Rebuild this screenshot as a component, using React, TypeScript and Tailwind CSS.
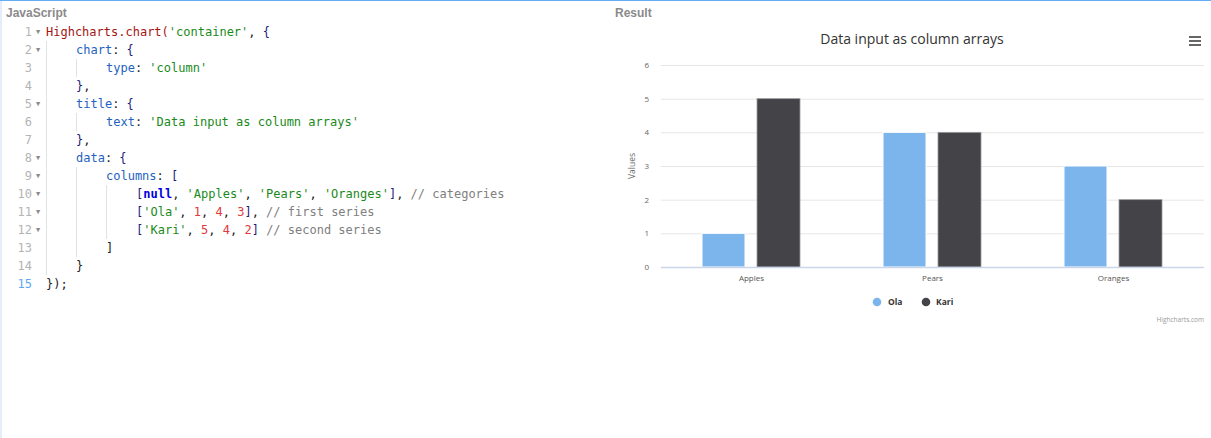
import React from "react";

type Tok = [string, string];

const C = {
  red: "text-[#a31515]",
  str: "text-[#1a8a1a]",
  brace: "text-[#1c1c78]",
  prop: "text-[#2462c0]",
  plain: "text-[#222222]",
  kw: "text-[#0000e0] font-bold",
  num: "text-[#e0393e]",
  cmt: "text-[#808080]",
};

const lines: { indent: number; fold: boolean; toks: Tok[] }[] = [
  { indent: 0, fold: true, toks: [["Highcharts.chart(", C.red], ["'container'", C.str], [", ", C.plain], ["{", C.brace]] },
  { indent: 1, fold: true, toks: [["chart", C.prop], [": ", C.plain], ["{", C.brace]] },
  { indent: 2, fold: false, toks: [["type", C.prop], [": ", C.plain], ["'column'", C.str]] },
  { indent: 1, fold: false, toks: [["}", C.brace], [",", C.plain]] },
  { indent: 1, fold: true, toks: [["title", C.prop], [": ", C.plain], ["{", C.brace]] },
  { indent: 2, fold: false, toks: [["text", C.prop], [": ", C.plain], ["'Data input as column arrays'", C.str]] },
  { indent: 1, fold: false, toks: [["}", C.brace], [",", C.plain]] },
  { indent: 1, fold: true, toks: [["data", C.prop], [": ", C.plain], ["{", C.brace]] },
  { indent: 2, fold: true, toks: [["columns", C.prop], [": ", C.plain], ["[", C.brace]] },
  {
    indent: 3,
    fold: true,
    toks: [
      ["[", C.brace], ["null", C.kw], [", ", C.plain], ["'Apples'", C.str], [", ", C.plain], ["'Pears'", C.str],
      [", ", C.plain], ["'Oranges'", C.str], ["]", C.brace], [", ", C.plain], ["// categories", C.cmt],
    ],
  },
  {
    indent: 3,
    fold: true,
    toks: [
      ["[", C.brace], ["'Ola'", C.str], [", ", C.plain], ["1", C.num], [", ", C.plain], ["4", C.num], [", ", C.plain],
      ["3", C.num], ["]", C.brace], [", ", C.plain], ["// first series", C.cmt],
    ],
  },
  {
    indent: 3,
    fold: true,
    toks: [
      ["[", C.brace], ["'Kari'", C.str], [", ", C.plain], ["5", C.num], [", ", C.plain], ["4", C.num], [", ", C.plain],
      ["2", C.num], ["]", C.brace], [" ", C.plain], ["// second series", C.cmt],
    ],
  },
  { indent: 2, fold: false, toks: [["]", C.plain]] },
  { indent: 1, fold: false, toks: [["}", C.plain]] },
  { indent: 0, fold: false, toks: [["});", C.plain]] },
];

function CodePanel() {
  return (
    <div className="flex flex-col">
      {lines.map((l, i) => {
        const active = i === lines.length - 1;
        return (
          <div key={i} className="flex h-[18px] leading-[18px] text-[12px]">
            <div className="w-[46px] flex shrink-0">
              <span className={"w-[32px] text-right " + (active ? "text-[#5aa8f2]" : "text-[#b4b4b4]")}>
                {i + 1}
              </span>
              <span className="w-[14px] pl-[4px] text-[7px] text-[#8a8a8a]">{l.fold ? "▼" : ""}</span>
            </div>
            <div className="flex whitespace-pre">
              {Array.from({ length: l.indent }).map((_, k) => (
                <span key={k} className="w-[30px] h-[18px] border-l border-[#e2e2e2] shrink-0" />
              ))}
              <span>
                {l.toks.map((t, j) => (
                  <span key={j} className={t[1]}>
                    {t[0]}
                  </span>
                ))}
              </span>
            </div>
          </div>
        );
      })}
    </div>
  );
}

function Chart() {
  const top = 42;
  const bottom = 244;
  const step = (bottom - top) / 6;
  const left = 52;
  const right = 595;
  const catW = (right - left) / 3;
  const cats = ["Apples", "Pears", "Oranges"];
  const ola = [1, 4, 3];
  const kari = [5, 4, 2];
  const font = "'Open Sans', 'Noto Sans', sans-serif";
  return (
    <svg width={602} height={316} viewBox="0 0 602 316" style={{ fontFamily: font }}>
      <text x={303} y={20.5} textAnchor="middle" fontSize={14} fill="#333333">
        Data input as column arrays
      </text>
      <g fill="#666666">
        <rect x={580} y={13} width={12} height={2} />
        <rect x={580} y={17} width={12} height={2} />
        <rect x={580} y={21} width={12} height={2} />
      </g>
      {[0, 1, 2, 3, 4, 5, 6].map((v) => {
        const y = bottom - v * step;
        return (
          <g key={v}>
            {v > 0 && <line x1={left} x2={right} y1={y + 0.5} y2={y + 0.5} stroke="#e6e6e6" strokeWidth={1} />}
            <text x={40} y={y + 3} textAnchor="end" fontSize={8} fill="#666666">
              {v}
            </text>
          </g>
        );
      })}
      <text
        x={24}
        y={143}
        textAnchor="middle"
        fontSize={8.5}
        fill="#666666"
        transform="rotate(-90 24 143)"
        dominantBaseline="middle"
      >
        Values
      </text>
      {cats.map((c, i) => {
        const x0 = left + catW * i;
        const ho = ola[i] * step;
        const hk = kari[i] * step;
        return (
          <g key={c}>
            <rect x={x0 + 41} y={bottom - ho} width={43} height={ho} fill="#7cb5ec" stroke="#ffffff" strokeWidth={1} />
            <rect x={x0 + 96} y={bottom - hk} width={43} height={hk} fill="#434348" stroke="#9a9a9e" strokeWidth={0.8} />
            <text x={x0 + catW / 2} y={258} textAnchor="middle" fontSize={8} fill="#555555">
              {c}
            </text>
          </g>
        );
      })}
      <line x1={left} x2={right} y1={bottom + 0.5} y2={bottom + 0.5} stroke="#ccd6eb" strokeWidth={1.5} />
      <circle cx={268} cy={279} r={4.3} fill="#7cb5ec" />
      <text x={279} y={282} fontSize={8.5} fontWeight="bold" fill="#333333">
        Ola
      </text>
      <circle cx={317} cy={279} r={4.3} fill="#434348" />
      <text x={327} y={282} fontSize={8.5} fontWeight="bold" fill="#333333">
        Kari
      </text>
      <text x={595} y={299} textAnchor="end" fontSize={6.5} fill="#999999">
        Highcharts.com
      </text>
    </svg>
  );
}

export default function App() {
  return (
    <div className="w-[1211px] h-[438px] bg-white border-t border-[#62aef5] flex overflow-hidden">
      <div className="w-[609px] shrink-0 border-l-2 border-[#e3eefa] flex flex-col">
        <div
          className="h-[22px] pt-[5px] pl-[4px] text-[12px] leading-[14px] font-bold text-[#8a8a8a]"
          style={{ fontFamily: "'Liberation Sans', Arial, sans-serif" }}
        >
          JavaScript
        </div>
        <div style={{ fontFamily: "'DejaVu Sans Mono', 'Liberation Mono', monospace" }} className="-ml-[2px]">
          <CodePanel />
        </div>
      </div>
      <div className="flex-1 flex flex-col">
        <div
          className="h-[22px] pt-[5px] pl-[6px] text-[12px] leading-[14px] font-bold text-[#8a8a8a]"
          style={{ fontFamily: "'Liberation Sans', Arial, sans-serif" }}
        >
          Result
        </div>
        <Chart />
      </div>
    </div>
  );
}
